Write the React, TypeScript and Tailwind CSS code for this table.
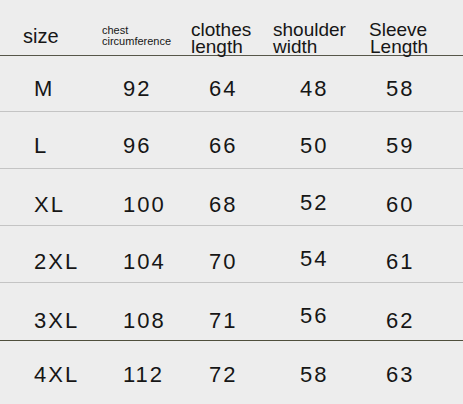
import React from "react";

type Row = {
  size: string;
  chest: string;
  clothes: string;
  shoulder: string;
  sleeve: string;
};

const rows: Row[] = [
  { size: "M", chest: "92", clothes: "64", shoulder: "48", sleeve: "58" },
  { size: "L", chest: "96", clothes: "66", shoulder: "50", sleeve: "59" },
  { size: "XL", chest: "100", clothes: "68", shoulder: "52", sleeve: "60" },
  { size: "2XL", chest: "104", clothes: "70", shoulder: "54", sleeve: "61" },
  { size: "3XL", chest: "108", clothes: "71", shoulder: "56", sleeve: "62" },
  { size: "4XL", chest: "112", clothes: "72", shoulder: "58", sleeve: "63" },
];

const rowClasses = [
  "h-[56px] pt-[22px] border-t border-[#57574a]",
  "h-[57px] pt-[23px] border-t border-[#c4c4c4]",
  "h-[57px] pt-[25px] border-t border-[#c4c4c4]",
  "h-[57px] pt-[25px] border-t border-[#c4c4c4]",
  "h-[58px] pt-[27px] border-t border-[#c4c4c4]",
  "h-[64px] pt-[23px] border-t border-[#4f4f3c]",
];

const shoulderShift = ["", "", "-mt-[2px]", "-mt-[3px]", "-mt-[5px]", ""];

export default function App() {
  return (
    <div
      className="w-[463px] h-[404px] bg-[#ededed] text-[#161616] overflow-hidden"
      style={{ fontFamily: '"Liberation Sans", Arial, sans-serif' }}
    >
      {/* Header */}
      <div className="h-[55px] flex items-end pl-[23px]">
        <div className="w-[79px] mb-[9px] text-[20px] leading-[20px]">size</div>
        <div className="w-[89px] mb-[8px] text-[11px] leading-[11px]">
          <div>chest</div>
          <div>circumference</div>
        </div>
        <div className="w-[82px] text-[19px] leading-[17px]">
          <div>clothes</div>
          <div>length</div>
        </div>
        <div className="w-[96px] text-[19px] leading-[17px]">
          <div>shoulder</div>
          <div>width</div>
        </div>
        <div className="text-[19px] leading-[17px]">
          <div>Sleeve</div>
          <div className="pl-[1px]">Length</div>
        </div>
      </div>

      {/* Body */}
      {rows.map((r, i) => (
        <div
          key={r.size}
          className={`flex items-start pl-[34px] text-[22px] leading-[22px] tracking-[2px] ${rowClasses[i]}`}
        >
          <div className="w-[89px]">{r.size}</div>
          <div className="w-[86px]">{r.chest}</div>
          <div className="w-[91px]">{r.clothes}</div>
          <div className={`w-[86px] ${shoulderShift[i]}`}>{r.shoulder}</div>
          <div>{r.sleeve}</div>
        </div>
      ))}
    </div>
  );
}
